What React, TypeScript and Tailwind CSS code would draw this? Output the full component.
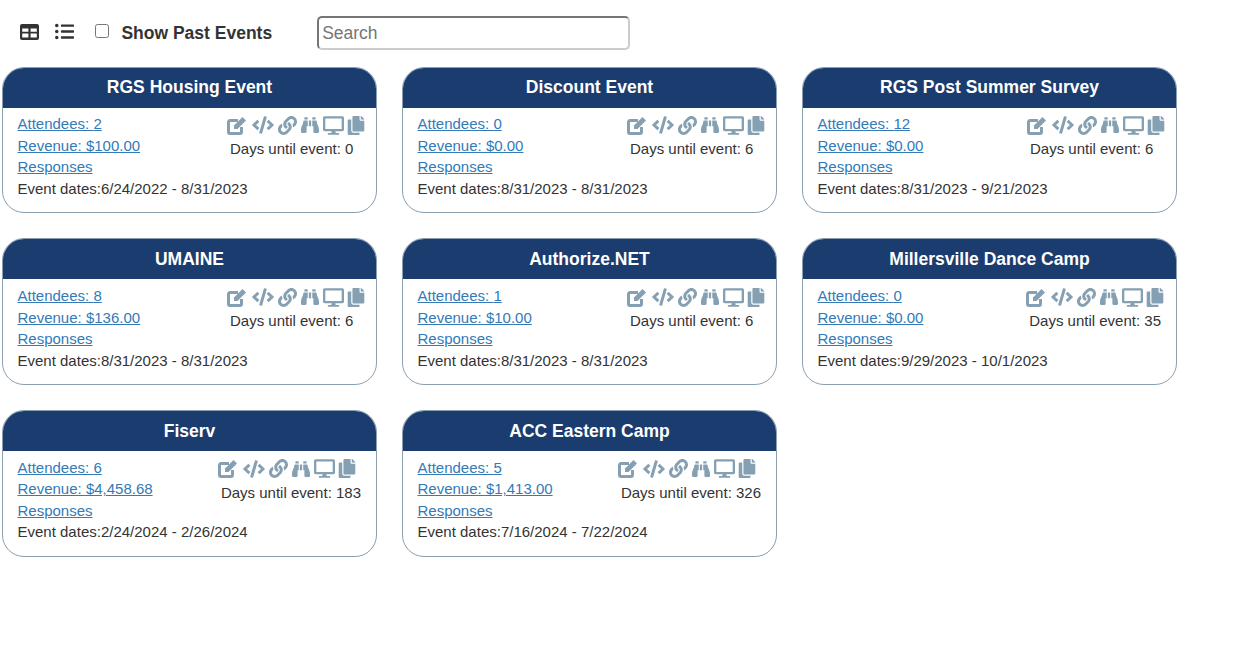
import { FaListUl, FaCode, FaLink, FaBinoculars, FaDesktop, FaCopy } from "react-icons/fa";

const eventos = [
  { titulo: "RGS Housing Event", asistentes: 2, ingresos: "$100.00", dias: 0, fechas: "6/24/2022 - 8/31/2023" },
  { titulo: "Discount Event", asistentes: 0, ingresos: "$0.00", dias: 6, fechas: "8/31/2023 - 8/31/2023" },
  { titulo: "RGS Post Summer Survey", asistentes: 12, ingresos: "$0.00", dias: 6, fechas: "8/31/2023 - 9/21/2023" },
  { titulo: "UMAINE", asistentes: 8, ingresos: "$136.00", dias: 6, fechas: "8/31/2023 - 8/31/2023" },
  { titulo: "Authorize.NET", asistentes: 1, ingresos: "$10.00", dias: 6, fechas: "8/31/2023 - 8/31/2023" },
  { titulo: "Millersville Dance Camp", asistentes: 0, ingresos: "$0.00", dias: 35, fechas: "9/29/2023 - 10/1/2023" },
  { titulo: "Fiserv", asistentes: 6, ingresos: "$4,458.68", dias: 183, fechas: "2/24/2024 - 2/26/2024" },
  { titulo: "ACC Eastern Camp", asistentes: 5, ingresos: "$1,413.00", dias: 326, fechas: "7/16/2024 - 7/22/2024" },
];

export default function App() {
  return (
    <div className="h-[655px] bg-white font-['Liberation_Sans',Arial,sans-serif] text-[15px] leading-[21.6px] text-[#333333] overflow-hidden">
      {/* Barra superior */}
      <div className="h-[66.9px] flex items-center pl-5 pb-[1px]">
        <IconoTabla />
        <FaListUl className="w-[19px] h-[19px] ml-[16px] mb-[2px] text-[#333333]" />
        <input type="checkbox" className="w-[14.4px] h-[14.4px] ml-[21px] mb-[4px]" />
        <span className="ml-[12px] mt-[2px] text-[17.5px] font-bold">Show Past Events</span>
        <input
          placeholder="Search"
          className="ml-[45px] w-[313px] h-[34px] px-[3px] pt-[2px] rounded-[5px] border-2 border-t-[#767676] border-l-[#767676] border-b-[#cccccc] border-r-[#cccccc] text-[17.5px] placeholder:text-[#757575]"
        />
      </div>

      {/* Tarjetas */}
      <div className="flex flex-wrap w-[1200px] pl-[2px] gap-x-[25px] gap-y-[25px]">
        {eventos.map((ev) => (
          <Tarjeta key={ev.titulo} {...ev} />
        ))}
      </div>
    </div>
  );
}

function IconoTabla() {
  return (
    <svg viewBox="0 0 19 16" className="w-[19px] h-[16px] mb-[2px] text-[#333333]" fill="currentColor">
      <path
        fillRule="evenodd"
        d="M2 0h15a2 2 0 0 1 2 2v12a2 2 0 0 1-2 2H2a2 2 0 0 1-2-2V2a2 2 0 0 1 2-2zM2.2 4.5v3.2h6.2V4.5zM10.6 4.5v3.2h6.2V4.5zM2.2 9.6v3.9h6.2V9.6zM10.6 9.6v3.9h6.2V9.6z"
      />
    </svg>
  );
}

function IconoEditar() {
  return (
    <svg viewBox="0 0 20 19" className="w-[20px] h-[19px]">
      <path
        d="M14.5 11v5a1.5 1.5 0 0 1-1.5 1.5H3A1.5 1.5 0 0 1 1.5 16V6A1.5 1.5 0 0 1 3 4.5h8"
        fill="none"
        stroke="currentColor"
        strokeWidth="3"
      />
      <path d="M7 9.5 15.5 1l3.5 3.5-8.5 8.5H7z" fill="currentColor" />
    </svg>
  );
}

interface TarjetaProps { titulo: string; asistentes: number; ingresos: string; dias: number; fechas: string }
function Tarjeta({ titulo, asistentes, ingresos, dias, fechas }: TarjetaProps) {
  return (
    <div className="w-[375px] h-[146.55px] rounded-[22px] border border-[#8aa0b2] overflow-hidden whitespace-nowrap">
      <div className="h-[39.9px] pt-[0.85px] bg-[#1b3c6e] text-white text-[17.5px] font-bold flex items-center justify-center">
        {titulo}
      </div>
      <div className="pl-[14.5px] pr-[9px] pt-[5.69px]">
        <div className="flex justify-between">
          <div className="flex flex-col">
            <a href="#" className="underline text-[#337ab7]">Attendees: {asistentes}</a>
            <a href="#" className="underline text-[#337ab7]">Revenue: {ingresos}</a>
            <a href="#" className="-mt-[0.25px] underline text-[#337ab7]">Responses</a>
          </div>
          <div className="flex flex-col min-w-[140px]">
            <div className="flex items-center h-[24px] text-[#84a0b2]">
              <IconoEditar />
              <FaCode className="w-[22px] h-[18px] ml-[5px]" />
              <FaLink className="w-[19px] h-[19px] ml-[4px]" />
              <FaBinoculars className="w-[18px] h-[18px] ml-[4px]" />
              <FaDesktop className="w-[21px] h-[19px] ml-[4px]" />
              <FaCopy className="w-[18px] h-[19px] ml-[3px]" />
            </div>
            <span className="ml-[3px] mr-[6px] mt-[1px]">Days until event: {dias}</span>
          </div>
        </div>
        <div>Event dates:{fechas}</div>
      </div>
    </div>
  );
}
